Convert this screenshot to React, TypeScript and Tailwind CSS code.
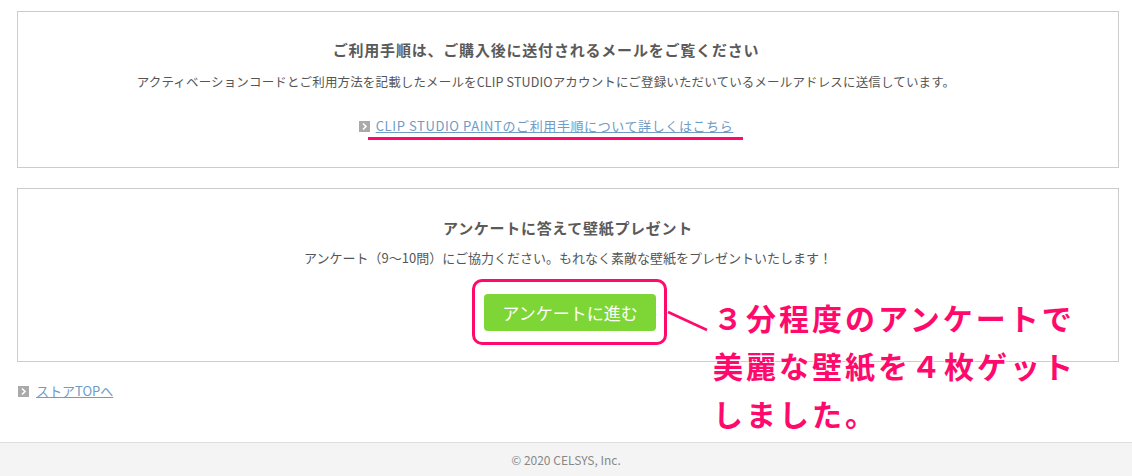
import React from "react";

const font = { fontFamily: '"Noto Sans CJK JP", "Noto Sans", sans-serif' };

function ArrowIcon() {
  return (
    <svg width="11" height="11" viewBox="0 0 11 11" className="shrink-0">
      <rect width="11" height="11" fill="#aaaaaa" />
      <path d="M4 2.5 L7 5.5 L4 8.5" fill="none" stroke="#fff" strokeWidth="1.6" />
    </svg>
  );
}

export default function App() {
  return (
    <div className="relative h-[476px] w-[1132px] overflow-hidden bg-white text-[#555]" style={font}>
      <div className="flex h-[442px] flex-col pl-[17px] pr-[13px] pt-[11px]">
        {/* purchase info */}
        <section className="flex h-[157px] flex-col items-center border border-[#cccccc] pr-[44px] pt-[27px]">
          <h2 className="text-[15px] font-bold leading-[22px] tracking-[0.8px] text-[#5a5a5a]">
            ご利用手順は、ご購入後に送付されるメールをご覧ください
          </h2>
          <p className="mt-[11px] text-[12.5px] leading-[20px] tracking-[0.15px]">
            アクティベーションコードとご利用方法を記載したメールをCLIP STUDIOアカウントにご登録いただいているメールアドレスに送信しています。
          </p>
          <div className="relative mt-[25px] flex items-center gap-[6px]">
            <ArrowIcon />
            <a href="#" className="text-[13px] leading-[18px] tracking-[0.6px] text-[#6e9cc4] underline">
              CLIP STUDIO PAINTのご利用手順について詳しくはこちら
            </a>
            <span className="absolute left-[9px] top-[20px] h-[3px] w-[375px] bg-[#ff0a6c]" />
          </div>
        </section>

        {/* survey */}
        <section className="mt-[20px] flex h-[174px] flex-col items-center border border-[#cccccc] pt-[28px]">
          <h2 className="text-[15px] font-bold leading-[22px] tracking-[0.7px] text-[#5a5a5a]">
            アンケートに答えて壁紙プレゼント
          </h2>
          <p className="mt-[10px] text-[13px] leading-[18px]">
            アンケート（9〜10問）にご協力ください。もれなく素敵な壁紙をプレゼントいたします！
          </p>
          <div className="relative ml-[4px] mt-[27px]">
            <button className="flex h-[37px] w-[172px] items-center justify-center rounded-[4px] bg-[#7ed636] text-[17px] text-white">
              アンケートに進む
            </button>
            <span className="absolute -left-[12px] -top-[15px] h-[66px] w-[195px] rounded-[10px] border-[3px] border-[#ff0a6c]" />
          </div>
        </section>

        <div className="mt-[21px] flex items-center gap-[7px] pl-[1px]">
          <ArrowIcon />
          <a href="#" className="text-[13px] leading-[16px] text-[#6e9cc4] underline">
            ストアTOPへ
          </a>
        </div>
      </div>

      <footer className="flex h-[34px] items-center justify-center border-t border-[#dddddd] bg-[#f4f4f4] text-[12px] text-[#888]">
        © 2020 CELSYS, Inc.
      </footer>

      {/* annotation overlay */}
      <svg className="absolute left-[666px] top-[309px]" width="44" height="24">
        <line x1="2" y1="3" x2="41" y2="21" stroke="#ff0a6c" strokeWidth="2.5" />
      </svg>
      <div
        className="absolute left-[713px] top-[293px] text-[30px] font-bold leading-[48px] tracking-[3px] text-[#ff0a6c]"
        style={{ textShadow: "0 0 2px #fff, 0 0 2px #fff, 0 0 3px #fff" }}
      >
        <div>３分程度のアンケートで</div>
        <div>美麗な壁紙を４枚ゲット</div>
        <div>しました。</div>
      </div>
    </div>
  );
}
